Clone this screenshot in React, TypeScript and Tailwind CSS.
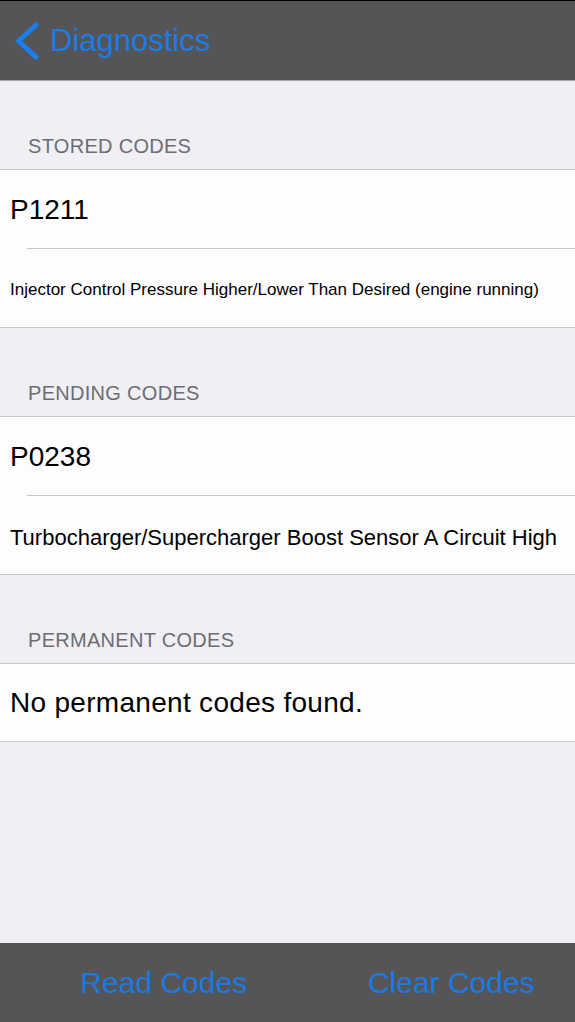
function SectionHeader({ title }: { title: string }) {
  return (
    <div className="h-[89px] flex items-end pb-[11px] pl-[28px] border-b border-[#c8c7cc]">
      <p className="text-[20px] leading-[24px] text-[#6d6d72] tracking-[0.3px]">{title}</p>
    </div>
  );
}

function CodeCell({ code, desc, descSize }: { code: string; desc: string; descSize: string }) {
  return (
    <div className="bg-[#fdfdfd] border-b border-[#c8c7cc]">
      <div className="h-[78px] flex items-center pl-[10px] pt-[1px]">
        <p className="text-[28px] text-black">{code}</p>
      </div>
      <div className="ml-[27px] h-px bg-[#c8c7cc]"></div>
      <div className="h-[78px] flex items-center pl-[10px] pt-[4px]">
        <p className={`${descSize} text-black`}>{desc}</p>
      </div>
    </div>
  );
}

export default function App() {
  return (
    <div className="w-[575px] h-[1022px] flex flex-col bg-[#efeff4] font-['Liberation_Sans',Arial,sans-serif]">
      <header className="h-[81px] bg-[#555557] border-t border-black border-b border-b-[#a4a4a8] flex items-center">
        <svg className="ml-[15px]" width="24" height="38" viewBox="0 0 24 38" fill="none">
          <polyline points="21,3 3.5,19 21,35" stroke="#1c7eec" strokeWidth="5" strokeLinecap="round" strokeLinejoin="round" />
        </svg>
        <p className="ml-[11px] text-[31px] text-[#1c7ce6] leading-none">Diagnostics</p>
      </header>

      <main className="flex-1 flex flex-col">
        <SectionHeader title="STORED CODES" />
        <CodeCell
          code="P1211"
          desc="Injector Control Pressure Higher/Lower Than Desired (engine running)"
          descSize="text-[17px]"
        />

        <SectionHeader title="PENDING CODES" />
        <CodeCell code="P0238" desc="Turbocharger/Supercharger Boost Sensor A Circuit High" descSize="text-[22px]" />

        <SectionHeader title="PERMANENT CODES" />
        <div className="bg-[#fdfdfd] border-b border-[#c8c7cc] h-[78px] flex items-center pl-[10px] pt-[1px]">
          <p className="text-[28px] tracking-[0.3px] text-black">No permanent codes found.</p>
        </div>
      </main>

      <footer className="h-[79px] bg-[#555557] flex">
        <div className="flex-1 flex items-center justify-center pl-[40px]">
          <p className="text-[30px] text-[#1a7ae2]">Read Codes</p>
        </div>
        <div className="flex-1 flex items-center justify-center pl-[40px]">
          <p className="text-[30px] text-[#1a7ae2]">Clear Codes</p>
        </div>
      </footer>
    </div>
  );
}
